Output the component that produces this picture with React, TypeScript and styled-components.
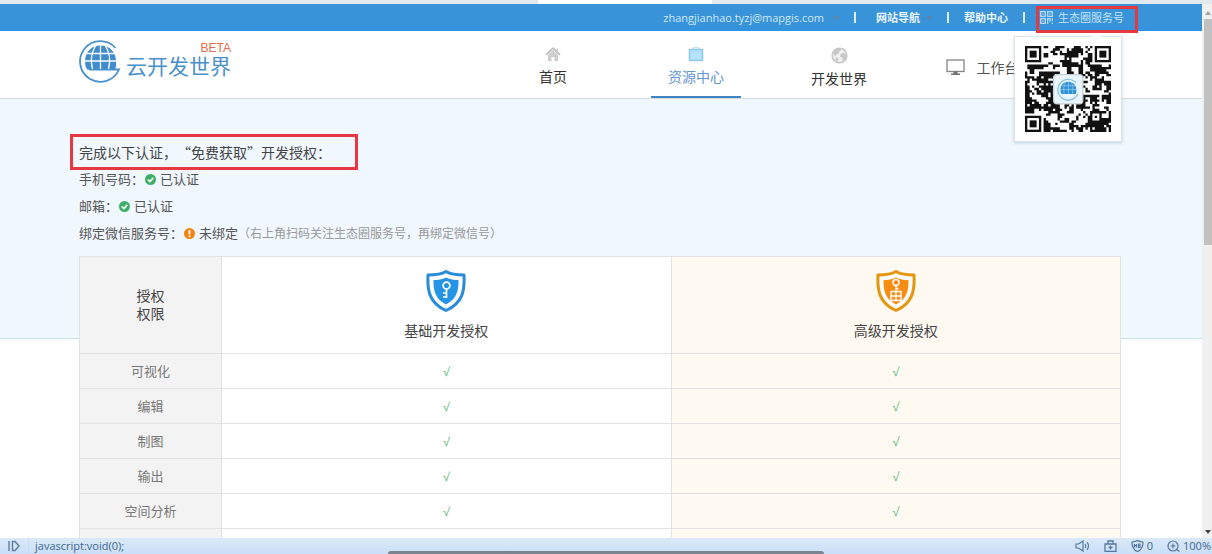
import React from 'react';
import styled, { createGlobalStyle, css } from 'styled-components';

const GlobalStyle = createGlobalStyle`
  * { box-sizing: border-box; }
  body {
    margin: 0;
    background: #fff;
    color: #555;
    font-family: "Open Sans", "Noto Sans CJK SC", sans-serif;
    font-size: 13px;
    text-spacing-trim: space-all;
  }
  button { font: inherit; color: inherit; background: none; border: 0; padding: 0; cursor: pointer; }
  a { color: inherit; text-decoration: none; }
  svg { display: block; flex: none; }
`;

const Browser = styled.div`
  display: flex;
  flex-direction: column;
  height: 100vh;
  overflow: hidden;
`;

const TabStrip = styled.div`
  display: flex;
  flex: none;
  justify-content: center;
  height: 4px;
  background: #dfe9ee;
`;

const ActiveTab = styled.div`
  width: 174px;
  margin-left: 38px;
  background: #fff;
`;

const Viewport = styled.div`
  display: flex;
  flex: 1;
  min-height: 0;
`;

const Page = styled.div`
  flex: 1;
  min-width: 0;
  overflow: hidden;
`;

const Scrollbar = styled.div`
  display: flex;
  flex-direction: column;
  align-items: center;
  width: 10px;
  padding: 7px 0 4px 2px;
  background: #f0f0f0;
`;

const Thumb = styled.div`
  width: 8px;
  height: 226px;
  margin: 4px 0 auto;
  background: #c1c1c1;
`;

const TopBar = styled.div`
  display: flex;
  justify-content: flex-end;
  align-items: center;
  height: 27px;
  padding-right: 78px;
  background: linear-gradient(#3893d8 0 22px, #2c93e4);
  color: #e9f5ff;
  font-size: 11px;
  line-height: 16px;
`;

const TopLink = styled.button<{ $strong?: boolean }>`
  display: flex;
  align-items: center;
  gap: 9px;
  font-weight: ${p => (p.$strong ? 700 : 400)};
`;

const Email = styled(TopLink)`
  color: #d0e8f9;
`;

const SiteMenu = styled(TopLink)`
  gap: 6px;
  padding-left: 5px;
`;

const Divider = styled.span`
  width: 2px;
  height: 11px;
  margin: 0 15px;
  background: #d9edfb;
`;

const Service = styled.div`
  position: relative;
  color: #c6e3f8;
`;

const ServiceLink = styled(TopLink)`
  gap: 5px;
`;

const marker = css`
  content: "";
  position: absolute;
  border: 3px solid #e6383f;
  pointer-events: none;
`;

const ServiceMark = styled.div`
  &::after { ${marker} inset: -4px -14px -7px -4px; z-index: 3; }
`;

const QrPopup = styled.div`
  position: absolute;
  z-index: 2;
  top: 26px;
  right: 2px;
  padding: 9px 10px;
  border: 1px solid #dbe5ea;
  background: #fff;
  box-shadow: 0 1px 3px rgba(90, 120, 140, 0.3);
  &::before {
    content: "";
    position: absolute;
    top: -5px;
    right: 19px;
    border: 5px solid transparent;
    border-top: 0;
    border-bottom-color: #fff;
  }
`;

const Header = styled.header`
  display: flex;
  justify-content: space-between;
  height: 68px;
  padding: 0 175px 0 78px;
  border-bottom: 1px solid #d3dadd;
  background: #fff;
`;

const Logo = styled.a`
  display: flex;
  gap: 5px;
  padding-top: 8px;
`;

const LogoText = styled.span`
  display: flex;
  flex-direction: column;
  color: #4a90cb;
  font-size: 21px;
  line-height: 24px;
`;

const Beta = styled.span`
  align-self: flex-end;
  margin-top: 3px;
  color: #e76c4c;
  font: 12px/12px "Liberation Sans", sans-serif;
`;

const Nav = styled.nav`
  display: flex;
  gap: 53px;
`;

const NavItem = styled.a<{ $active?: boolean; $row?: boolean }>`
  display: flex;
  flex-direction: ${p => (p.$row ? 'row' : 'column')};
  align-items: center;
  justify-content: ${p => (p.$row ? 'center' : 'flex-start')};
  gap: ${p => (p.$row ? 12 : 5)}px;
  width: 90px;
  padding-top: ${p => (p.$row ? 8 : 16)}px;
  border-bottom: 2px solid ${p => (p.$active ? '#4184bd' : 'transparent')};
  color: ${p => (p.$active ? '#6596cc' : p.$row ? '#555' : '#333')};
  font-size: 14px;
  line-height: 20px;
  white-space: nowrap;
`;

const Main = styled.main`
  padding: 35px 81px 0 79px;
  background: linear-gradient(#f0f7fe 0 239px, #c4e2f0 239px 240px, #fff 240px);
`;

const Title = styled.h1`
  position: relative;
  width: fit-content;
  margin: 0;
  color: #444;
  font-size: 14px;
  font-weight: 400;
  line-height: 36px;
  font-family: "Noto Sans CJK SC", sans-serif;
  &::after { ${marker} inset: 0 -27px 0 -9px; }
`;

const StatusRow = styled.p`
  display: flex;
  align-items: center;
  margin: 0;
  color: #555;
  line-height: 27px;
  svg { margin: 0 4px 0 1px; }
`;

const StatusList = styled.section`
  padding: 0 0 9px;
  margin-top: -4px;
`;

const Note = styled.span`
  color: #999;
  font-size: 12px;
`;

const Table = styled.table`
  width: 100%;
  border-collapse: collapse;
  table-layout: fixed;
  text-align: center;
  background: #fff;
  td, th { border: 1px solid #e2e2e2; padding: 0; font-weight: 400; }
`;

const HeadCell = styled.th<{ $tone?: 'gray' | 'cream' }>`
  width: ${p => (p.$tone === 'gray' ? '142px' : 'auto')};
  height: 97px;
  background: ${p => (p.$tone === 'gray' ? '#f3f3f3' : p.$tone === 'cream' ? '#fef9f1' : '#fff')};
  color: #444;
  font-size: 14px;
  line-height: 18px;
  svg { margin: 0 auto 10px; }
`;

const RowLabel = styled.th`
  height: 35px;
  background: #f3f3f3;
  color: #777;
  line-height: 20px;
`;

const Check = styled.td<{ $cream?: boolean }>`
  background: ${p => (p.$cream ? '#fef9f1' : '#fff')};
  color: #5fb987;
  font-size: 12px;
`;

const StatusBar = styled.footer`
  position: relative;
  display: flex;
  flex: none;
  align-items: center;
  height: 16px;
  padding: 0 1px 0 8px;
  background: linear-gradient(#dbe9f8, #c9dff7);
  color: #3d678f;
  font-size: 11px;
  line-height: 16px;
`;

const StatusUrl = styled.span`
  margin: 0 auto 0 8px;
  padding-left: 6px;
  border-left: 1px solid #cddcec;
`;

const Tools = styled.div`
  display: flex;
  gap: 14px;
`;

const Tool = styled.button`
  display: flex;
  align-items: center;
  gap: 3px;
`;

const Dock = styled.div`
  position: absolute;
  bottom: 0;
  left: 32%;
  width: 36%;
  height: 3px;
  border-radius: 3px 3px 0 0;
  background: #7a8591;
`;

const QR_SIZE = 37;

function inFinder(x: number, y: number) {
  const edge = QR_SIZE - 8;
  return (x < 8 && y < 8) || (x >= edge && y < 8) || (x < 8 && y >= edge);
}

function qrPath() {
  let seed = 4217;
  const next = () => {
    seed = (seed * 48271) % 2147483647;
    return seed / 2147483647;
  };
  const cells: boolean[][] = [];
  let d = '';
  for (let y = 0; y < QR_SIZE; y++) {
    cells.push([]);
    for (let x = 0; x < QR_SIZE; x++) {
      const pick = next();
      let dark = next() < 0.52;
      if (pick < 0.25 && x > 0) dark = cells[y][x - 1];
      else if (pick < 0.5 && y > 0) dark = cells[y - 1][x];
      const ring = Math.max(Math.abs(x - 30), Math.abs(y - 30));
      if (ring <= 2) dark = ring !== 1;
      cells[y].push(dark);
      if (dark && !inFinder(x, y)) d += `M${x} ${y}h1v1h-1z`;
    }
  }
  return d;
}

const QR_PATH = qrPath();

const Finder = ({ x, y }: { x: number; y: number }) => (
  <g>
    <rect x={x} y={y} width="7" height="7" fill="#111" />
    <rect x={x + 1} y={y + 1} width="5" height="5" fill="#fff" />
    <rect x={x + 2} y={y + 2} width="3" height="3" fill="#111" />
  </g>
);

const GlobeShape = () => (
  <g>
    <path d="M37.500 9A20.300 20.300 0 1 0 41 30.500H11" fill="none" stroke="#4a90cb" strokeWidth="1.800" />
    <path d="M9 30.500a16 16 0 0 1-2-8C7 13 13.500 6.500 22.500 6.500S38 13 38 22.500a16 16 0 0 1-1 8z" fill="#3f8dce" />
    <path d="M22.500 6v24M6 22h33M8.500 14.500h28M17.500 7C13 14 12.500 22 14.500 30M27.500 7C32 14 32.500 22 30.500 30" fill="none" stroke="#fff" strokeWidth="1.300" />
  </g>
);

const QrCode = () => (
  <svg width="86" height="86" viewBox={`0 0 ${QR_SIZE} ${QR_SIZE}`} role="img" aria-label="生态圈服务号">
    <path d={QR_PATH} fill="#111" />
    <Finder x={0} y={0} />
    <Finder x={30} y={0} />
    <Finder x={0} y={30} />
    <rect x="12.300" y="12.300" width="12.600" height="12.600" rx="1.500" fill="#e9f5fc" stroke="#c5ced2" strokeWidth="0.500" />
    <g transform="translate(13.700 13.900) scale(0.220)">
      <path d="M37.500 9A20.300 20.300 0 1 0 41 30.500" fill="none" stroke="#8cc4e8" strokeWidth="2.500" />
      <path d="M9 30.500a16 16 0 0 1-2-8C7 13 13.500 6.500 22.500 6.500S38 13 38 22.500a16 16 0 0 1-1 8z" fill="#2f92d6" />
      <path d="M22.500 6v24M6 22h33M8.500 14.500h28M17.500 7C13 14 12.500 22 14.500 30M27.500 7C32 14 32.500 22 30.500 30" fill="none" stroke="#9fd0ee" strokeWidth="1.300" />
    </g>
  </svg>
);

const LogoMark = () => (
  <svg width="43" height="44" viewBox="0 0 43 44"><GlobeShape /></svg>
);

const Caret = () => (
  <svg width="6" height="4" viewBox="0 0 6 4"><path d="M0 .5h6L3 3.500z" fill="#6d7f93" /></svg>
);

const ScrollArrow = ({ down }: { down?: boolean }) => (
  <svg width="6" height="4" viewBox="0 0 6 4">
    <path d={down ? 'M0 0h6L3 4z' : 'M0 4h6L3 0z'} fill={down ? '#444' : '#a0a0a0'} />
  </svg>
);

const QrGlyph = () => (
  <svg width="13" height="13" viewBox="0 0 13 13" fill="none" stroke="#b5daf5" strokeWidth="1.300">
    <path d="M.7.7h4.600v4.600H.7zM7.700.7h4.600v4.600H7.700zM.7 7.700h4.600v4.600H.7zM2.500 3h1M9.500 3h1M2.500 10h1M7.700 13V7.700H10v3M12.300 7v3M12.300 11.500V13" />
  </svg>
);

const HomeIcon = () => (
  <svg width="16" height="15" viewBox="0 0 16 15">
    <path d="M8 1 1 8M8 1l7 7" stroke="#c4c4c4" strokeWidth="2" fill="none" />
    <path d="M3 8l5-5 5 5v6H9.500v-4h-3v4H3zM11.500 1.500h1.500v3h-1.500z" fill="#cecece" />
  </svg>
);

const CaseIcon = () => (
  <svg width="16" height="15" viewBox="0 0 16 15">
    <path d="M5 2V.8h6V2" stroke="#b5dcee" fill="none" />
    <rect x="1.500" y="2.500" width="13" height="11" fill="#b5e2fb" stroke="#8cc9ea" strokeWidth="1.400" />
  </svg>
);

const EarthIcon = () => (
  <svg width="17" height="17" viewBox="0 0 17 17">
    <circle cx="8.500" cy="8.500" r="7.300" fill="#f1f1f1" stroke="#c8c8c8" strokeWidth="1.600" />
    <path d="M2 5.500 5 2l4-.7 1 2-2 1.500-.5 2-2 .5-.5 1.700L3 8zM9.500 7l3-1.500L15.500 8l-1 4-2.500 2-1-3.500-2-1zM5 10l2.500 1.500L7 14.500 4.500 13z" fill="#c8c8c8" />
  </svg>
);

const MonitorIcon = () => (
  <svg width="19" height="17" viewBox="0 0 19 17">
    <rect x="1" y="1" width="17" height="11.500" fill="#fff" stroke="#858585" strokeWidth="1.300" />
    <path d="M7.500 12.500h4v2H14V16H5v-1.500h2.500z" fill="#707070" />
  </svg>
);

const OkIcon = () => (
  <svg width="11" height="11" viewBox="0 0 11 11">
    <circle cx="5.500" cy="5.500" r="5.500" fill="#3fae68" />
    <path d="M2.800 5.500l2 2 3.400-3.600" fill="none" stroke="#fff" strokeWidth="1.600" />
  </svg>
);

const WarnIcon = () => (
  <svg width="11" height="11" viewBox="0 0 11 11">
    <circle cx="5.500" cy="5.500" r="5.500" fill="#f5820f" />
    <path d="M5.500 2v4.500M5.500 7.500V9" stroke="#fff" strokeWidth="1.800" />
  </svg>
);

const Shield = ({ edge, fill, advanced }: { edge: string; fill: string; advanced?: boolean }) => (
  <svg width="40" height="42" viewBox="0 0 40 42">
    <path d="M20 1.500c5 3 11 3.500 18 3.500.8 15-1 28-18 35.500C3 33 1.200 20 2 5c7 0 13-.5 18-3.500z" fill="#fff" stroke={edge} strokeWidth="3" strokeLinejoin="round" />
    <path d="M20 7.500c4 2 8 2.500 12.500 2.500.3 11-2 19-12.500 24.500C9.500 29 7.200 21 7.500 10 12 10 16 9.500 20 7.500z" fill={fill} />
    {advanced ? (
      <g fill="none" stroke="#fff" strokeWidth="1.400">
        <circle cx="20" cy="12.500" r="3" />
        <path d="M20 15.500v6M20 18.500h2.500" />
        <path d="M15 21.500h10v9H15zM20 21.500v9M15 26h10" />
      </g>
    ) : (
      <g fill="none" stroke="#fff" strokeWidth="1.700">
        <circle cx="20.500" cy="15.500" r="3.400" />
        <path d="M20.500 19v9M20.500 23H17M20.500 27H17" />
      </g>
    )}
  </svg>
);

const PanelIcon = () => (
  <svg width="12" height="12" viewBox="0 0 12 12" fill="none" stroke="#5c7f9f" strokeWidth="1.400">
    <path d="M1 1v10M4.500 1.500v9H7L11 6 7 1.500z" />
  </svg>
);

const SoundIcon = () => (
  <svg width="15" height="12" viewBox="0 0 15 12" fill="none" stroke="#56799b" strokeWidth="1.200">
    <path d="M1 4h2.500L8 1v10L3.500 8H1zM10 4q1.500 2 0 4M12 2q3 4 0 8" />
  </svg>
);

const KitIcon = () => (
  <svg width="13" height="12" viewBox="0 0 13 12" fill="none" stroke="#56799b" strokeWidth="1.300">
    <path d="M1 4h11v7.300H1zM4 4V1h5v3M6.500 5.500v4M4.500 7.500h4" />
  </svg>
);

const GuardIcon = () => (
  <svg width="13" height="12" viewBox="0 0 13 12" fill="none" stroke="#56799b" strokeWidth="1.200">
    <path d="M6.500.7 12 2.200c0 4.500-1 7.500-5.500 9.300C2 9.700 1 6.700 1 2.200zM3.500 4v3.500M5.500 4v3.500M3.500 5.700h2M7.500 4v3.500h1.500V4z" />
  </svg>
);

const ZoomIcon = () => (
  <svg width="13" height="12" viewBox="0 0 13 12" fill="none" stroke="#56799b" strokeWidth="1.200">
    <circle cx="6" cy="6" r="5" />
    <path d="M6 3.500v5M3.500 6h5M9.500 9.500l3 2" />
  </svg>
);

const features = [
  { name: '可视化', mark: '√' },
  { name: '编辑', mark: '√' },
  { name: '制图', mark: '√' },
  { name: '输出', mark: '√' },
  { name: '空间分析', mark: '√' },
  { name: '', mark: '' },
];

export default function App() {
  return (
    <Browser>
      <GlobalStyle />
      <TabStrip><ActiveTab /></TabStrip>
      <Viewport>
        <Page>
          <TopBar>
            <Email>zhangjianhao.tyzj@mapgis.com<Caret /></Email>
            <Divider />
            <SiteMenu $strong>网站导航<Caret /></SiteMenu>
            <Divider />
            <TopLink $strong>帮助中心</TopLink>
            <Divider />
            <Service>
              <ServiceMark>
                <ServiceLink><QrGlyph />生态圈服务号</ServiceLink>
              </ServiceMark>
              <QrPopup><QrCode /></QrPopup>
            </Service>
          </TopBar>
          <Header>
            <Logo href="#">
              <LogoMark />
              <LogoText><Beta>BETA</Beta>云开发世界</LogoText>
            </Logo>
            <Nav>
              <NavItem href="#"><HomeIcon />首页</NavItem>
              <NavItem href="#" $active><CaseIcon />资源中心</NavItem>
              <NavItem href="#"><EarthIcon />开发世界</NavItem>
              <NavItem href="#" $row><MonitorIcon />工作台</NavItem>
            </Nav>
          </Header>
          <Main>
            <Title>完成以下认证，“免费获取”开发授权：</Title>
            <StatusList>
              <StatusRow>手机号码：<OkIcon />已认证</StatusRow>
              <StatusRow>邮箱：<OkIcon />已认证</StatusRow>
              <StatusRow>绑定微信服务号：<WarnIcon />未绑定<Note>（右上角扫码关注生态圈服务号，再绑定微信号）</Note></StatusRow>
            </StatusList>
            <Table>
              <thead>
                <tr>
                  <HeadCell $tone="gray">授权<br />权限</HeadCell>
                  <HeadCell><Shield edge="#2a8bdb" fill="#2494e6" />基础开发授权</HeadCell>
                  <HeadCell $tone="cream"><Shield edge="#e5960f" fill="#f98c12" advanced />高级开发授权</HeadCell>
                </tr>
              </thead>
              <tbody>
                {features.map(({ name, mark }) => (
                  <tr key={name}>
                    <RowLabel scope="row">{name}</RowLabel>
                    <Check>{mark}</Check>
                    <Check $cream>{mark}</Check>
                  </tr>
                ))}
              </tbody>
            </Table>
          </Main>
        </Page>
        <Scrollbar>
          <ScrollArrow />
          <Thumb />
          <ScrollArrow down />
        </Scrollbar>
      </Viewport>
      <StatusBar>
        <PanelIcon />
        <StatusUrl>javascript:void(0);</StatusUrl>
        <Tools>
          <Tool aria-label="声音"><SoundIcon /></Tool>
          <Tool aria-label="工具箱"><KitIcon /></Tool>
          <Tool><GuardIcon />0</Tool>
          <Tool><ZoomIcon />100%</Tool>
        </Tools>
        <Dock />
      </StatusBar>
    </Browser>
  );
}
